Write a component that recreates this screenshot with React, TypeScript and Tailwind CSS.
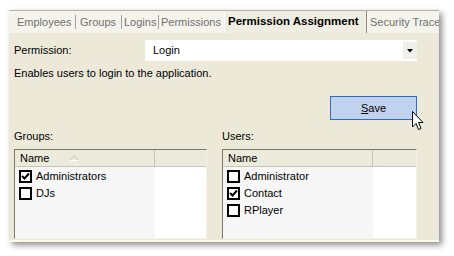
import React from "react";

const font = { fontFamily: '"Liberation Sans", Arial, sans-serif' };

function Check({ checked }: { checked?: boolean }) {
  return (
    <span className="flex h-[13px] w-[13px] shrink-0 items-center justify-center border-2 border-black bg-white">
      {checked && (
        <svg width="9" height="9" viewBox="0 0 9 9">
          <path d="M1 4 L3.5 6.5 L8 1.5" stroke="#000" strokeWidth="2" fill="none" />
        </svg>
      )}
    </span>
  );
}

function ListBox({ colWidth, sortArrow, items }: { colWidth: number; sortArrow?: boolean; items: { label: string; checked?: boolean }[] }) {
  return (
    <div className="flex h-[90px] flex-1 flex-col border border-t-[#7a7868] border-l-[#7a7868] border-r-[#f4f2e6] border-b-[#f4f2e6] bg-white">
      <div className="flex h-[17px] shrink-0 border-b border-[#c9c5b3] bg-[#ebeadb]">
        <div
          className="flex items-center gap-[20px] border-r border-[#c9c5b3] pl-[5px]"
          style={{ width: colWidth }}
        >
          <span>Name</span>
          {sortArrow && (
            <svg width="10" height="6" viewBox="0 0 10 6">
              <path d="M0.5 5.5 L5 1 L9.5 5.5" stroke="#c6c3b3" fill="none" />
              <path d="M0.5 5.5 L9.5 5.5" stroke="#fff" />
            </svg>
          )}
        </div>
      </div>
      <div className="flex flex-1">
        <div className="flex flex-col bg-[#f7f7f7] pl-[4px] pt-[1px]" style={{ width: colWidth }}>
          {items.map((it) => (
            <div key={it.label} className="flex h-[17px] items-center gap-[4px]">
              <Check checked={it.checked} />
              <span className="text-black">{it.label}</span>
            </div>
          ))}
        </div>
        <div className="flex-1 bg-white" />
      </div>
    </div>
  );
}

export default function App() {
  return (
    <div className="h-[256px] w-[454px] bg-white pl-[9px] pt-[10px] text-[11px] text-black" style={font}>
      <div className="relative flex h-[232px] w-[430px] flex-col border-t border-[#b7b39e] border-b-2 border-b-[#fbf8e4] bg-[#ece9d8] shadow-[3px_3px_6px_rgba(0,0,0,0.45)]">
        {/* tabs */}
        <div className="flex h-[22px] shrink-0 items-center overflow-hidden whitespace-nowrap bg-[#f4f3ec] text-[11px] text-[#707070]">
          <span className="w-[66px] shrink-0 pl-[8px]">Employees</span>
          <span className="h-[14px] w-px shrink-0 bg-[#a0a0a0]" />
          <span className="w-[45px] shrink-0 pl-[4px]">Groups</span>
          <span className="h-[14px] w-px shrink-0 bg-[#a0a0a0]" />
          <span className="w-[36px] shrink-0 pl-[2px]">Logins</span>
          <span className="h-[14px] w-px shrink-0 bg-[#a0a0a0]" />
          <span className="w-[65px] shrink-0 pl-[2px]">Permissions</span>
          <span className="flex h-full w-[142px] shrink-0 items-center border-l border-white bg-[#efede2] pl-[3px] text-[11.5px] font-bold text-black">
            Permission Assignment
          </span>
          <span className="h-full w-px shrink-0 bg-[#8f8c7d]" />
          <span className="pl-[3px]">Security Trace</span>
        </div>

        {/* body */}
        <div className="flex flex-1 flex-col pl-[5px] pr-[22px]">
          <div className="mt-[7px] flex h-[21px] items-center">
            <span className="w-[131px]">Permission:</span>
            <div className="flex h-full flex-1 items-center justify-between bg-white pl-[8px]">
              <span>Login</span>
              <div className="flex h-[17px] w-[14px] items-center justify-center bg-[#f0efea]">
                <svg width="6" height="4" viewBox="0 0 6 4">
                  <path d="M0 0 H6 L3 3.5 Z" fill="#000" />
                </svg>
              </div>
            </div>
          </div>
          <div className="mt-[5px] h-[14px] leading-[14px]">Enables users to login to the application.</div>

          <div className="relative mt-[16px] flex justify-end">
            <button className="flex h-[24px] w-[87px] items-center justify-center border border-[#316ac5] bg-[#c1d2ee]">
              <span>
                <span className="underline">S</span>ave
              </span>
            </button>
            <svg className="absolute right-[-7px] top-[15px]" width="12" height="20" viewBox="0 0 12 20">
              <path
                d="M0.5 0.5 L0.5 16 L4 12.5 L6.5 18.5 L9 17.5 L6.5 11.5 L11 11.5 Z"
                fill="#fff"
                stroke="#000"
                strokeLinejoin="round"
              />
            </svg>
          </div>

          <div className="mt-[9px] flex gap-[15px]">
            <div className="flex w-[193px] flex-col">
              <span className="h-[14px] leading-[14px]">Groups:</span>
              <div className="mt-[6px] flex">
                <ListBox
                  colWidth={140}
                  sortArrow
                  items={[{ label: "Administrators", checked: true }, { label: "DJs" }]}
                />
              </div>
            </div>
            <div className="flex flex-1 flex-col">
              <span className="h-[14px] leading-[14px]">Users:</span>
              <div className="mt-[6px] flex">
                <ListBox
                  colWidth={150}
                  items={[
                    { label: "Administrator" },
                    { label: "Contact", checked: true },
                    { label: "RPlayer" },
                  ]}
                />
              </div>
            </div>
          </div>
        </div>
      </div>
    </div>
  );
}
